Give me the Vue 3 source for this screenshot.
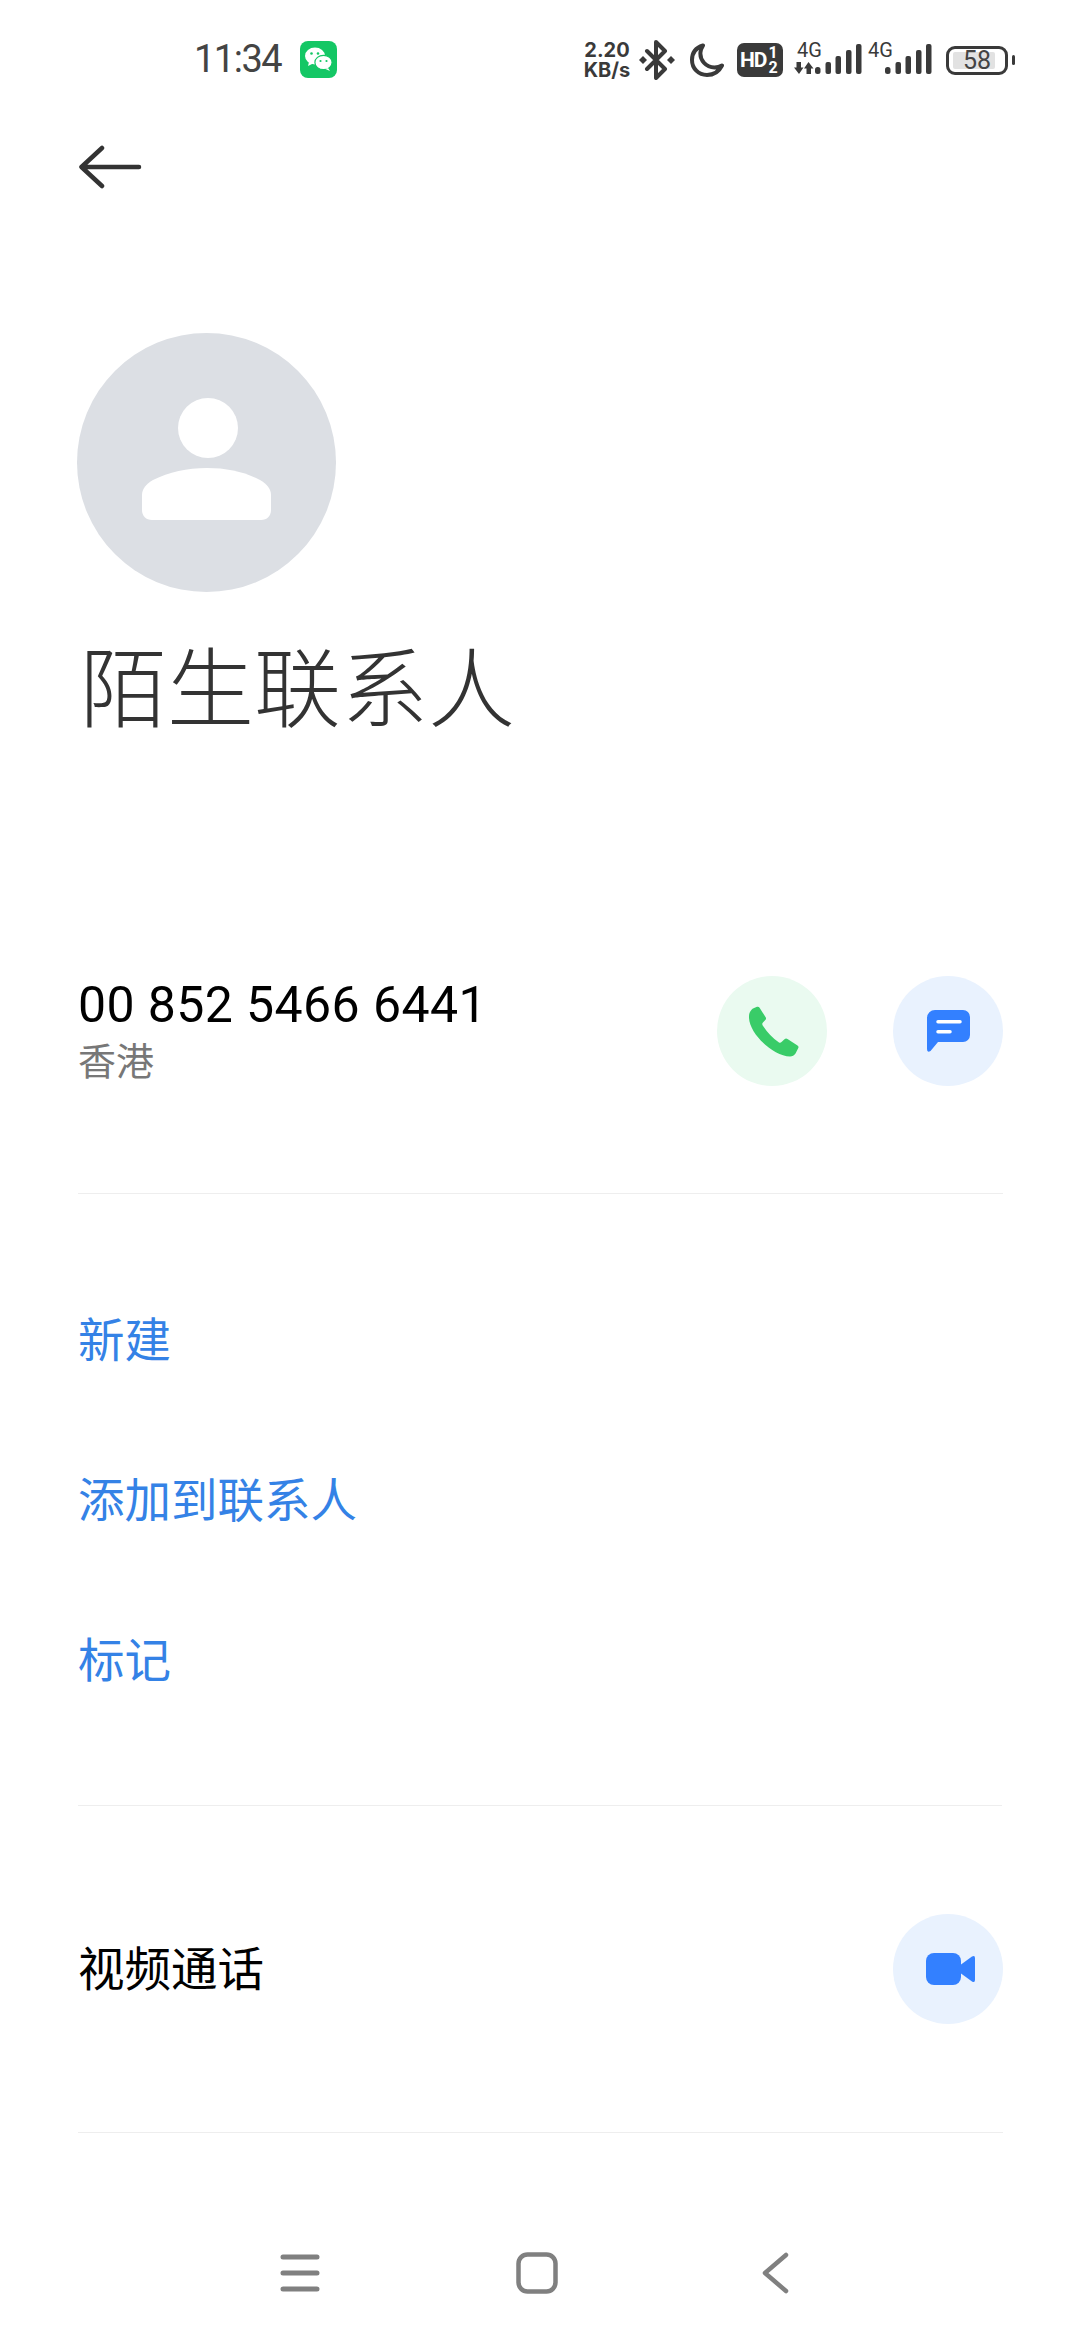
<script setup>
const actions = ['新建', '添加到联系人', '标记']
</script>

<template>
  <div class="page">
    <div class="status">
      <div class="status-left">
        <span class="time">11:34</span>
        <svg class="wechat" width="37" height="37" viewBox="0 0 37 37">
          <rect width="37" height="37" rx="8" fill="#14c765" />
          <ellipse cx="15" cy="15" rx="10" ry="8.5" fill="#fff" />
          <path d="M9 21l-1 4 5-2.5z" fill="#fff" />
          <ellipse cx="23.5" cy="21.5" rx="8.6" ry="7.2" fill="#fff" stroke="#14c765" stroke-width="1.2" />
          <path d="M28 27l2 3-4.5-2z" fill="#fff" />
          <circle cx="11.5" cy="12.5" r="1.3" fill="#14c765" />
          <circle cx="18" cy="12.5" r="1.3" fill="#14c765" />
          <circle cx="20.5" cy="20" r="1.1" fill="#14c765" />
          <circle cx="26.5" cy="20" r="1.1" fill="#14c765" />
        </svg>
      </div>
      <div class="status-right">
        <div class="speed"><span>2.20</span><span>KB/s</span></div>
        <svg class="bt" width="36" height="40" viewBox="0 0 36 40" fill="none" stroke="#3a3a3a" stroke-width="4" stroke-linejoin="round" stroke-linecap="round">
          <path d="M8 11l18 18-9 9V2l9 9-18 18" />
          <path d="M4 16l4 4-4 4-4-4zM32 16l4 4-4 4-4-4z" fill="#3a3a3a" stroke="none" />
        </svg>
        <svg class="moon" width="34" height="34" viewBox="0 0 34 34" fill="none" stroke="#3a3a3a" stroke-width="4" stroke-linejoin="round">
          <path d="M13 2.5C5 5 2 11 2 17c0 8.5 6.5 15 15 15 6.5 0 12-3.5 15-9.5-2.5 1.5-5 2-7.5 2C16 24.5 9.5 17 10.5 9c.3-2.500 1.300-4.500 2.500-6.500z" />
        </svg>
        <div class="hd"><span class="hd-main">HD</span><span class="hd-sims"><i>1</i><i>2</i></span></div>
        <div class="signal signal-a">
          <svg width="68" height="32" viewBox="0 0 68 32">
            <path d="M2.500 19h4.500v5.500h2.500l-4.500 6.500-5-6.500h2.500zM14.500 19l5 6.500h-2.500v5.500h-4.500v-5.500h-2.500z" fill="#3a3a3a" />
            <rect x="21" y="24" width="5.5" height="7" rx="2.5" fill="#3a3a3a" />
            <rect x="31.5" y="19" width="5.5" height="12" rx="2" fill="#3a3a3a" />
            <rect x="41.5" y="13" width="5.5" height="18" rx="2" fill="#3a3a3a" />
            <rect x="52" y="7" width="5.5" height="24" rx="2" fill="#3a3a3a" />
            <rect x="62" y="1" width="5.5" height="30" rx="2" fill="#3a3a3a" />
          </svg>
          <span class="sig-text">4G</span>
        </div>
        <div class="signal signal-b">
          <svg width="64" height="32" viewBox="0 0 64 32">
            <rect x="17" y="24" width="5.5" height="7" rx="2.5" fill="#3a3a3a" />
            <rect x="27.5" y="19" width="5.5" height="12" rx="2" fill="#3a3a3a" />
            <rect x="37.5" y="13" width="5.5" height="18" rx="2" fill="#3a3a3a" />
            <rect x="48" y="7" width="5.5" height="24" rx="2" fill="#3a3a3a" />
            <rect x="58" y="1" width="5.5" height="30" rx="2" fill="#3a3a3a" />
          </svg>
          <span class="sig-text">4G</span>
        </div>
        <div class="battery">
          <div class="battery-body"><span class="battery-fill"></span><span class="battery-num">58</span></div>
          <span class="battery-nub"></span>
        </div>
      </div>
    </div>

    <div class="topbar">
      <svg width="64" height="44" viewBox="0 0 64 44" fill="none" stroke="#333" stroke-width="4.5" stroke-linecap="round" stroke-linejoin="round">
        <path d="M61 22H4M24 3L3.5 22 24 41" />
      </svg>
    </div>

    <div class="hero">
      <svg class="avatar" width="259" height="259" viewBox="0 0 259 259">
        <circle cx="129.5" cy="129.5" r="129.5" fill="#dcdfe4" />
        <circle cx="131" cy="95" r="30" fill="#fff" />
        <path d="M65 162c0-6 4-11 11-15 16-8 34-12 54-12s38 4 53 12c7 4 11 9 11 15v15c0 6-4 10-10 10H75c-6 0-10-4-10-10z" fill="#fff" />
      </svg>
      <h1 class="name">陌生联系人</h1>
    </div>

    <div class="row number-row">
      <div class="number-info">
        <div class="number">00 852 5466 6441</div>
        <div class="region">香港</div>
      </div>
      <div class="btns">
        <div class="round green">
          <svg class="phone-icon" width="50" height="51" viewBox="0 0 50 51">
            <path d="M4 2.5L8 .8Q9.5.3 10.4 1.6L16.8 11.5Q17.5 12.8 16.5 13.8L13.5 17Q13 18 13.7 19.5 21 30.5 30 36.5 31.5 37.2 32.5 36L35.5 33.2Q37 32 38.5 33L48.5 39.5Q50 40.5 49.3 42L46.5 47.5Q44.5 50.5 41 50.5C24 50-1 27 0 10 0 5 4 2.5 4 2.5z" fill="#39cc68" />
          </svg>
        </div>
        <div class="round blue">
          <svg width="43" height="42" viewBox="0 0 43 42">
            <path d="M8 0H36a7 7 0 0 1 7 7V25a7 7 0 0 1-7 7H11L3.5 41Q0 43 0 39V8a8 8 0 0 1 8-8z" fill="#3380ff" />
            <path d="M11 11.7H33M11 21.7H23" stroke="#fff" stroke-width="3.5" stroke-linecap="round" />
          </svg>
        </div>
      </div>
    </div>

    <div class="actions">
      <div v-for="a in actions" :key="a" class="action">{{ a }}</div>
    </div>

    <div class="row video-row">
      <div class="video-label">视频通话</div>
      <div class="round blue">
        <svg class="video-icon" width="49" height="32" viewBox="0 0 49 32">
          <rect width="35" height="32" rx="8" fill="#3380ff" />
          <path d="M35 11.5L46 3.5Q49 2 49 5V27Q49 30 46 28.5L35 20.5z" fill="#3380ff" />
        </svg>
      </div>
    </div>

    <div class="nav">
      <svg width="40" height="38" viewBox="0 0 40 38" stroke="#808080" stroke-width="5" stroke-linecap="round">
        <path d="M3 3H37M3 19H37M3 35H37" />
      </svg>
      <svg width="42" height="42" viewBox="0 0 42 42" fill="none" stroke="#808080" stroke-width="4.5">
        <rect x="2.5" y="2.5" width="37" height="37" rx="9" />
      </svg>
      <svg class="nav-back" width="27" height="42" viewBox="0 0 27 42" fill="none" stroke="#808080" stroke-width="4.5" stroke-linecap="round" stroke-linejoin="round">
        <path d="M24 3L3 21 24 39" />
      </svg>
    </div>
  </div>
</template>

<style>
html, body {
  margin: 0;
  background: #fff;
}
</style>

<style scoped>
.page {
  width: 1080px;
  height: 2340px;
  background: #fff;
  display: flex;
  flex-direction: column;
  overflow: hidden;
  font-family: Roboto, "Noto Sans CJK SC", sans-serif;
}
.status {
  height: 118px;
  box-sizing: border-box;
  padding: 40px 65px 0 194px;
  display: flex;
  justify-content: space-between;
  align-items: flex-start;
  color: #3a3a3a;
}
.status-left {
  display: flex;
  align-items: center;
  gap: 19px;
}
.time {
  font-size: 38px;
  line-height: 38px;
  letter-spacing: -1.5px;
  color: #444;
}
.status-right {
  display: flex;
  align-items: center;
  height: 40px;
  margin-left: auto;
}
.speed {
  width: 50px;
  display: flex;
  flex-direction: column;
  align-items: center;
  font-family: Inter, sans-serif;
  font-weight: 700;
  font-size: 20px;
  line-height: 20px;
  margin-right: 7px;
}
.moon {
  margin-left: 15px;
}
.hd {
  margin-left: 13px;
  width: 46px;
  height: 34px;
  box-sizing: border-box;
  padding-left: 3px;
  background: #3a3a3a;
  border-radius: 7px;
  color: #fff;
  display: flex;
  align-items: center;
  font-weight: 700;
}
.hd-main {
  font-size: 21px;
  letter-spacing: -1px;
}
.hd-sims {
  display: flex;
  flex-direction: column;
  font-size: 16px;
  line-height: 15px;
  margin-left: 2px;
}
.hd-sims i {
  font-style: normal;
}
.signal {
  position: relative;
  height: 32px;
  margin-top: -2px;
}
.signal svg {
  display: block;
}
.signal-a {
  margin-left: 11px;
}
.signal-b {
  margin-left: 6px;
}
.sig-text {
  position: absolute;
  top: -1px;
  left: 0;
  font-size: 20px;
  line-height: 16px;
  color: #3a3a3a;
}
.signal-a .sig-text {
  left: 3px;
}
.battery {
  margin-left: 14px;
  display: flex;
  align-items: center;
  gap: 4px;
}
.battery-body {
  position: relative;
  width: 62px;
  height: 29px;
  box-sizing: border-box;
  border: 3px solid #3a3a3a;
  border-radius: 9px;
  display: flex;
  align-items: center;
  justify-content: center;
}
.battery-fill {
  position: absolute;
  left: 4px;
  top: 3px;
  bottom: 3px;
  width: 42px;
  background: #e2e2e2;
  border-radius: 2px;
}
.battery-num {
  position: relative;
  font-size: 25px;
  line-height: 23px;
  color: #444;
}
.battery-nub {
  width: 3px;
  height: 10px;
  background: #3a3a3a;
  border-radius: 2px;
}
.topbar {
  height: 98px;
  padding-left: 78px;
  box-sizing: border-box;
  padding-top: 27px;
}
.hero {
  padding: 117px 78px 0;
}
.avatar {
  display: block;
  margin-left: -1px;
}
.name {
  margin: 31px 0 0 2px;
  font-size: 87px;
  line-height: 120px;
  font-weight: 300;
  color: #333;
  font-family: "Noto Sans CJK SC", sans-serif;
}
.row {
  margin: 0 77px 0 78px;
  display: flex;
  justify-content: space-between;
  align-items: center;
  box-sizing: border-box;
}
.number-row {
  margin-top: 233px;
  height: 218px;
  border-bottom: 1px solid #eee;
  align-items: flex-start;
}
.number {
  font-size: 50px;
  line-height: 58px;
  letter-spacing: 0.4px;
  color: #000;
}
.region {
  font-size: 38px;
  line-height: 50px;
  color: #777;
  font-family: "Noto Sans CJK SC", sans-serif;
}
.btns {
  display: flex;
  gap: 66px;
}
.round {
  width: 110px;
  height: 110px;
  border-radius: 50%;
  display: flex;
  align-items: center;
  justify-content: center;
}
.green {
  background: #eafaf0;
}
.blue {
  background: #e9f2fe;
}
.phone-icon,
.video-icon {
  margin-left: 4px;
}
.actions {
  margin: 0 78px;
  padding: 111px 0 116px;
  border-bottom: 1px solid #eee;
  display: flex;
  flex-direction: column;
  gap: 96px;
}
.action {
  font-size: 46.5px;
  line-height: 64px;
  color: #3482e6;
  font-family: "Noto Sans CJK SC", sans-serif;
}
.video-row {
  height: 327px;
  border-bottom: 1px solid #eee;
}
.video-label {
  font-size: 46.5px;
  padding-bottom: 8px;
  color: #000;
  font-family: "Noto Sans CJK SC", sans-serif;
}
.nav {
  flex: 1;
  display: flex;
  align-items: flex-start;
  padding: 119px 0 0 280px;
  gap: 196px;
}
.nav svg:first-child {
  margin-top: 2px;
}
.nav-back {
  margin-left: 8px;
}
</style>
